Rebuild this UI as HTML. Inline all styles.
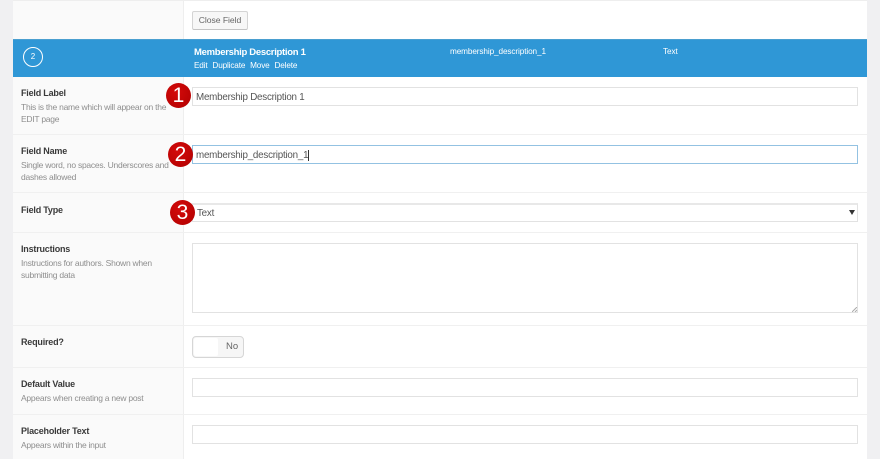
<!DOCTYPE html>
<html>
<head>
<meta charset="utf-8">
<style>
html,body{margin:0;padding:0;width:880px;height:459px;overflow:hidden;background:#f0f0f2;font-family:"Liberation Sans",sans-serif;}
#w{position:absolute;left:0;top:0;width:880px;height:459px;filter:blur(.3px);}
div{position:absolute;box-sizing:border-box;white-space:nowrap;}
.t{line-height:14px;}
.lab{font-size:9px;font-weight:bold;color:#3a3a3a;left:21px;letter-spacing:-.2px;}
.desc{font-size:8.5px;color:#8e8e8e;left:21px;letter-spacing:-.25px;}
.inp{left:192px;width:666px;height:19px;background:#fff;border:1px solid #e2e2e2;font-size:9.8px;color:#555;line-height:19px;padding-left:3px;letter-spacing:-.22px;}
.rule{left:13px;width:854px;height:1px;background:#f0f0f0;}
.badge{width:25px;height:25px;border-radius:50%;background:radial-gradient(circle at 40% 35%,#d40a0a,#b00000);color:#fff;font-size:21px;line-height:25px;text-align:center;}
</style>
</head>
<body>
<div id="w">
<div style="left:13px;top:0;width:854px;height:459px;background:#fff;"></div>
<div style="left:13px;top:0;width:171px;height:459px;background:#fafafa;border-right:1px solid #eee;"></div>
<div style="left:13px;top:0;width:854px;height:1px;background:#eee;"></div>

<div style="left:192px;top:11px;width:56px;height:19px;background:#f7f7f7;border:1px solid #d4d4d4;border-bottom-color:#c4c4c4;border-radius:2px;font-size:8.6px;color:#666;line-height:17px;text-align:center;letter-spacing:-.05px;">Close Field</div>

<div style="left:13px;top:39px;width:854px;height:38px;background:#2f97d6;border-top:1px solid #4a9fd0;"></div>
<div style="left:23px;top:47px;width:20px;height:20px;border:1px solid #fff;border-radius:50%;color:#fff;font-size:8px;line-height:18px;text-align:center;">2</div>
<div class="t" style="left:194px;top:46px;font-size:9.5px;font-weight:bold;color:#fff;letter-spacing:-.3px;">Membership Description 1</div>
<div class="t" style="left:194px;top:59px;font-size:8.2px;color:#fff;word-spacing:2.8px;letter-spacing:-.15px;">Edit Duplicate Move Delete</div>
<div class="t" style="left:450px;top:45px;font-size:8.2px;color:#fff;letter-spacing:-.1px;">membership_description_1</div>
<div class="t" style="left:663px;top:45px;font-size:8.2px;color:#fff;letter-spacing:-.1px;">Text</div>

<div class="t lab" style="top:86px;">Field Label</div>
<div class="t desc" style="top:100px;">This is the name which will appear on the</div>
<div class="t desc" style="top:112px;">EDIT page</div>
<div class="inp" style="top:87px;">Membership Description 1</div>
<div class="rule" style="top:134px;"></div>

<div class="t lab" style="top:144px;">Field Name</div>
<div class="t desc" style="top:158px;">Single word, no spaces. Underscores and</div>
<div class="t desc" style="top:170px;">dashes allowed</div>
<div class="inp" style="top:145px;border-color:#93c2e2;">membership_description_1<span style="border-left:1px solid #333;"></span></div>
<div class="rule" style="top:192px;"></div>

<div class="t lab" style="top:203px;">Field Type</div>
<div class="inp" style="top:203px;height:19px;border-top:2px solid #e8e8e8;line-height:18px;padding-left:4px;">Text</div>
<div style="left:849px;top:210px;width:0;height:0;border-left:3px solid transparent;border-right:3px solid transparent;border-top:5px solid #333;"></div>
<div class="rule" style="top:232px;"></div>

<div class="t lab" style="top:242px;">Instructions</div>
<div class="t desc" style="top:256px;">Instructions for authors. Shown when</div>
<div class="t desc" style="top:268px;">submitting data</div>
<div class="inp" style="top:243px;height:70px;"></div>
<svg style="position:absolute;left:852px;top:307px;" width="5" height="5"><path d="M0 5L5 0M3 5L5 3" stroke="#aaa" stroke-width="1"/></svg>
<div class="rule" style="top:325px;"></div>

<div class="t lab" style="top:335px;">Required?</div>
<div style="left:192px;top:336px;width:52px;height:22px;background:#f6f6f6;border:1px solid #d6d6d6;border-radius:4px;"></div>
<div style="left:194px;top:338px;width:24px;height:18px;background:#fff;border-radius:2px;"></div>
<div class="t" style="left:226px;top:340px;font-size:9.5px;color:#666;">No</div>
<div class="rule" style="top:367px;"></div>

<div class="t lab" style="top:377px;">Default Value</div>
<div class="t desc" style="top:391px;">Appears when creating a new post</div>
<div class="inp" style="top:378px;"></div>
<div class="rule" style="top:414px;"></div>

<div class="t lab" style="top:424px;">Placeholder Text</div>
<div class="t desc" style="top:438px;">Appears within the input</div>
<div class="inp" style="top:425px;"></div>

<div class="badge" style="left:166px;top:83px;">1</div>
<div class="badge" style="left:168px;top:142px;">2</div>
<div class="badge" style="left:170px;top:200px;">3</div>
</div>
</body>
</html>
